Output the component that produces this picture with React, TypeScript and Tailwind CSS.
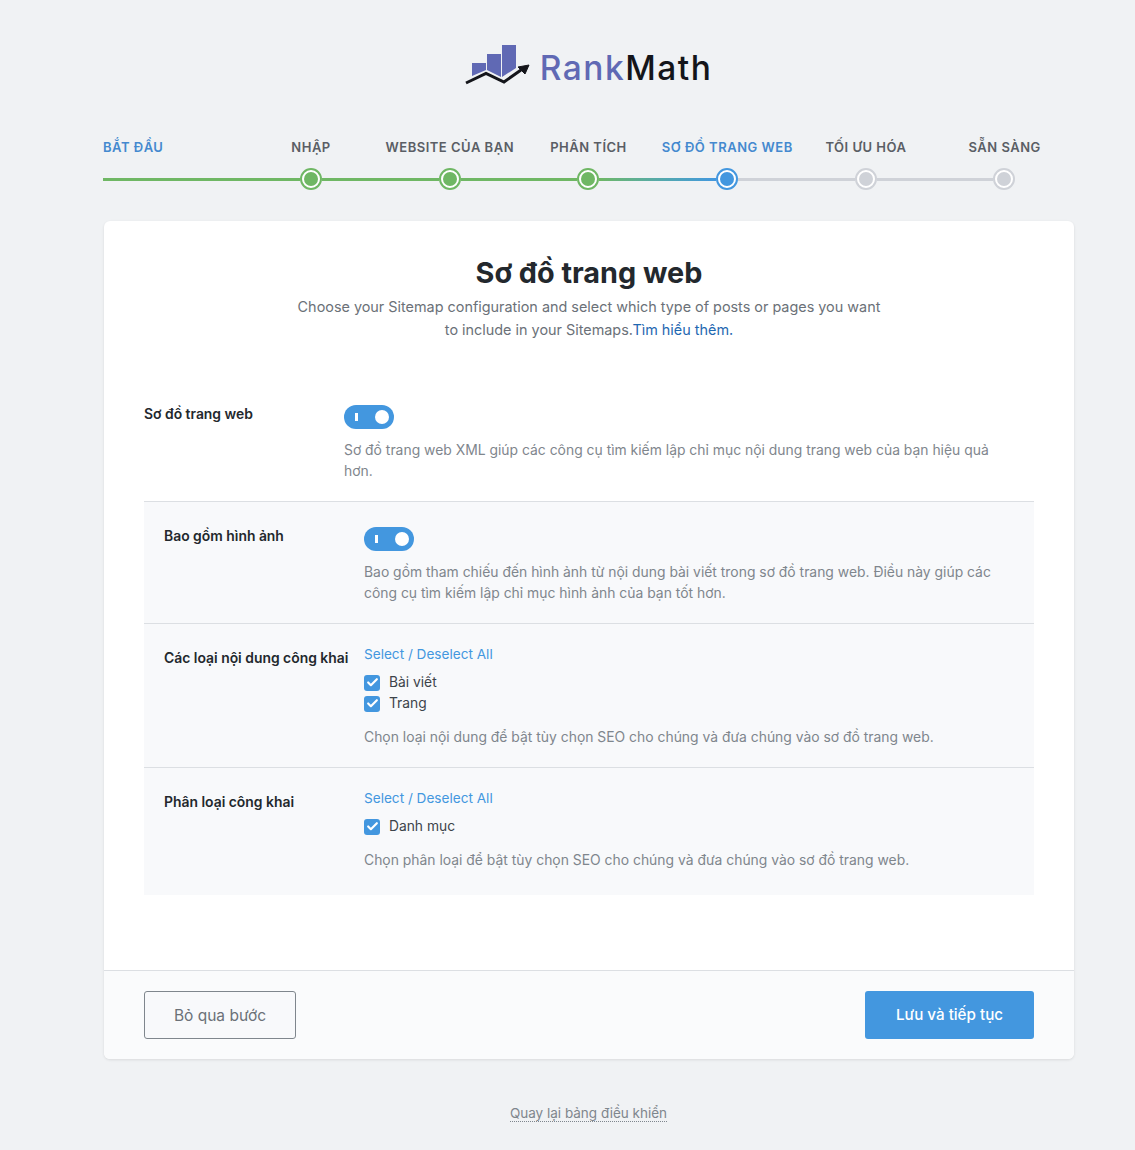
import { Check } from 'lucide-react'

const font = { fontFamily: 'Inter, "Noto Sans", sans-serif' }

const steps = [
  { label: 'BẮT ĐẦU', color: 'text-[#4489cf]', align: 'text-left' },
  { label: 'NHẬP', color: 'text-[#5a5e65]', align: 'text-center' },
  { label: 'WEBSITE CỦA BẠN', color: 'text-[#5a5e65]', align: 'text-center' },
  { label: 'PHÂN TÍCH', color: 'text-[#5a5e65]', align: 'text-center' },
  { label: 'SƠ ĐỒ TRANG WEB', color: 'text-[#4489cf]', align: 'text-center' },
  { label: 'TỐI ƯU HÓA', color: 'text-[#5a5e65]', align: 'text-center' },
  { label: 'SẴN SÀNG', color: 'text-[#5a5e65]', align: 'text-center' },
]

function Logo() {
  return (
    <div className="flex items-center justify-center h-[44px]">
      <svg width="66" height="44" viewBox="0 0 66 44" className="mr-[9px] -mt-[2px]">
        <polygon points="7,18 21,18 21,25 7,31" fill="#6069b4" />
        <polygon points="22,9 36,9 36,32 22,25" fill="#6069b4" />
        <polygon points="37,0 51,0 51,23 37,32" fill="#6069b4" />
        <path d="M1 38 L21 28.5 L39 37 L56 25" fill="none" stroke="#14151a" strokeWidth="3" />
        <path d="M53 22 L64 20 L60 29 Z" fill="#14151a" stroke="#14151a" strokeWidth="1" />
      </svg>
      <span className="text-[33.5px] leading-[44px] font-medium tracking-[1.5px] text-[#6069b4]">
        Rank<span className="text-[#14151a]">Math</span>
      </span>
    </div>
  )
}

function Dot({ tone }: { tone: 'done' | 'active' | 'todo' }) {
  const outer = {
    done: 'border-[#6fb764]',
    active: 'border-[#4397df]',
    todo: 'border-[#cfd2d8]',
  }[tone]
  const inner = {
    done: 'bg-[#6fb764]',
    active: 'bg-[#4397df]',
    todo: 'bg-[#cfd2d8]',
  }[tone]
  return (
    <div className={`h-[22px] w-[22px] shrink-0 rounded-full border-2 bg-white p-[2px] ${outer}`}>
      <div className={`h-full w-full rounded-full ${inner}`} />
    </div>
  )
}

function Toggle() {
  return (
    <div className="relative h-[24px] w-[50px] rounded-full bg-[#4397df]">
      <div className="absolute left-[11px] top-[8px] h-[8px] w-[3px] bg-white" />
      <div className="absolute right-[5px] top-[5px] h-[14px] w-[14px] rounded-full bg-white" />
    </div>
  )
}

function Box({ label }: { label: string }) {
  return (
    <div className="flex h-[21px] items-center text-[13.8px] text-[#3c434a]">
      <span className="mr-[9px] flex h-[16px] w-[16px] items-center justify-center rounded-[3px] bg-[#4397df]">
        <Check size={13} strokeWidth={4} className="text-white" />
      </span>
      {label}
    </div>
  )
}

function Hint({ children }: { children: React.ReactNode }) {
  return <p className="max-w-[655px] text-[13.9px] leading-[21px] text-[#7f868d]">{children}</p>
}

function Label({ children }: { children: React.ReactNode }) {
  return <div className="w-[200px] shrink-0 text-[13.9px] font-semibold leading-[21px] text-[#23282d]">{children}</div>
}

function SelectAll() {
  return <div className="mb-[7px] text-[13.6px] leading-[21px] text-[#4397df]">Select / Deselect All</div>
}

export default function App() {
  return (
    <div className="min-h-[1150px] bg-[#f0f2f4]" style={font}>
      <div className="ml-[103px] w-[971px] pt-[46px]">
        <Logo />

        <div className="mt-[47px] grid grid-cols-7">
          {steps.map((s) => (
            <div key={s.label} className={`text-[13px] font-semibold leading-[20px] tracking-[0.5px] whitespace-nowrap ${s.align} ${s.color}`}>
              {s.label}
            </div>
          ))}
        </div>

        {/* progress line */}
        <div className="mt-[11px] flex h-[22px] items-center">
          <div className="h-[3px] w-[197px] bg-[#6fb764]" />
          <Dot tone="done" />
          <div className="h-[3px] w-[117px] bg-[#6fb764]" />
          <Dot tone="done" />
          <div className="h-[3px] w-[116px] bg-[#6fb764]" />
          <Dot tone="done" />
          <div className="h-[3px] w-[117px] bg-gradient-to-r from-[#6fb764] to-[#4397df]" />
          <Dot tone="active" />
          <div className="h-[3px] w-[117px] bg-[#cfd2d8]" />
          <Dot tone="todo" />
          <div className="h-[3px] w-[116px] bg-[#cfd2d8]" />
          <Dot tone="todo" />
        </div>

        <div className="ml-[1px] mt-[31px] w-[970px] rounded-[6px] bg-white shadow-[0_1px_3px_rgba(0,0,0,0.1)]">
          <div className="px-[40px] pt-[34px] pb-[75px]">
            <h1 className="text-center text-[28.8px] font-bold leading-[36px] text-[#23282d]">Sơ đồ trang web</h1>
            <p className="mx-auto mt-[4px] w-[640px] text-center text-[14.4px] leading-[23px] text-[#6b7178]">
              Choose your Sitemap configuration and select which type of posts or pages you want
              <br />
              to include in your Sitemaps.<span className="text-[#1f68b1]">Tìm hiểu thêm.</span>
            </p>

            <div className="mt-[54px] flex border-b border-[#dcdfe3] pt-[10px] pb-[19px]">
              <div className="-mt-[1px]"><Label>Sơ đồ trang web</Label></div>
              <div className="min-w-0 flex-1">
                <Toggle />
                <div className="mt-[11px]">
                  <Hint>Sơ đồ trang web XML giúp các công cụ tìm kiếm lập chỉ mục nội dung trang web của bạn hiệu quả hơn.</Hint>
                </div>
              </div>
            </div>

            <div className="bg-[#f8f9fb]">
              <div className="flex border-b border-[#dcdfe3] px-[20px] pt-[25px] pb-[19px]">
                <div className="-mt-[1px]"><Label>Bao gồm hình ảnh</Label></div>
                <div className="min-w-0 flex-1">
                  <Toggle />
                  <div className="mt-[11px]">
                    <Hint>Bao gồm tham chiếu đến hình ảnh từ nội dung bài viết trong sơ đồ trang web. Điều này giúp các công cụ tìm kiếm lập chỉ mục hình ảnh của bạn tốt hơn.</Hint>
                  </div>
                </div>
              </div>

              <div className="flex border-b border-[#dcdfe3] px-[20px] pt-[20px] pb-[19px]">
                <div className="pt-[4px]"><Label>Các loại nội dung công khai</Label></div>
                <div className="min-w-0 flex-1">
                  <SelectAll />
                  <Box label="Bài viết" />
                  <Box label="Trang" />
                  <div className="mt-[13px]">
                    <Hint>Chọn loại nội dung để bật tùy chọn SEO cho chúng và đưa chúng vào sơ đồ trang web.</Hint>
                  </div>
                </div>
              </div>

              <div className="flex px-[20px] pt-[20px] pb-[24px]">
                <div className="pt-[4px]"><Label>Phân loại công khai</Label></div>
                <div className="min-w-0 flex-1">
                  <SelectAll />
                  <Box label="Danh mục" />
                  <div className="mt-[13px]">
                    <Hint>Chọn phân loại để bật tùy chọn SEO cho chúng và đưa chúng vào sơ đồ trang web.</Hint>
                  </div>
                </div>
              </div>
            </div>
          </div>

          <div className="flex items-center justify-between rounded-b-[6px] border-t border-[#dcdfe3] bg-[#fafbfc] px-[40px] py-[20px]">
            <button className="h-[48px] w-[152px] rounded-[3px] border border-[#7f868d] bg-[#f8f9fb] pt-[1px] text-[15.5px] text-[#6b7178]">Bỏ qua bước</button>
            <button className="h-[48px] w-[169px] rounded-[3px] bg-[#4397df] pt-[1px] text-[15.2px] font-medium text-white">Lưu và tiếp tục</button>
          </div>
        </div>

        <div className="mt-[41px] text-center">
          <a className="border-b border-dotted border-[#7f868d] text-[13.5px] text-[#7f868d]">Quay lại bảng điều khiển</a>
        </div>
      </div>
    </div>
  )
}
